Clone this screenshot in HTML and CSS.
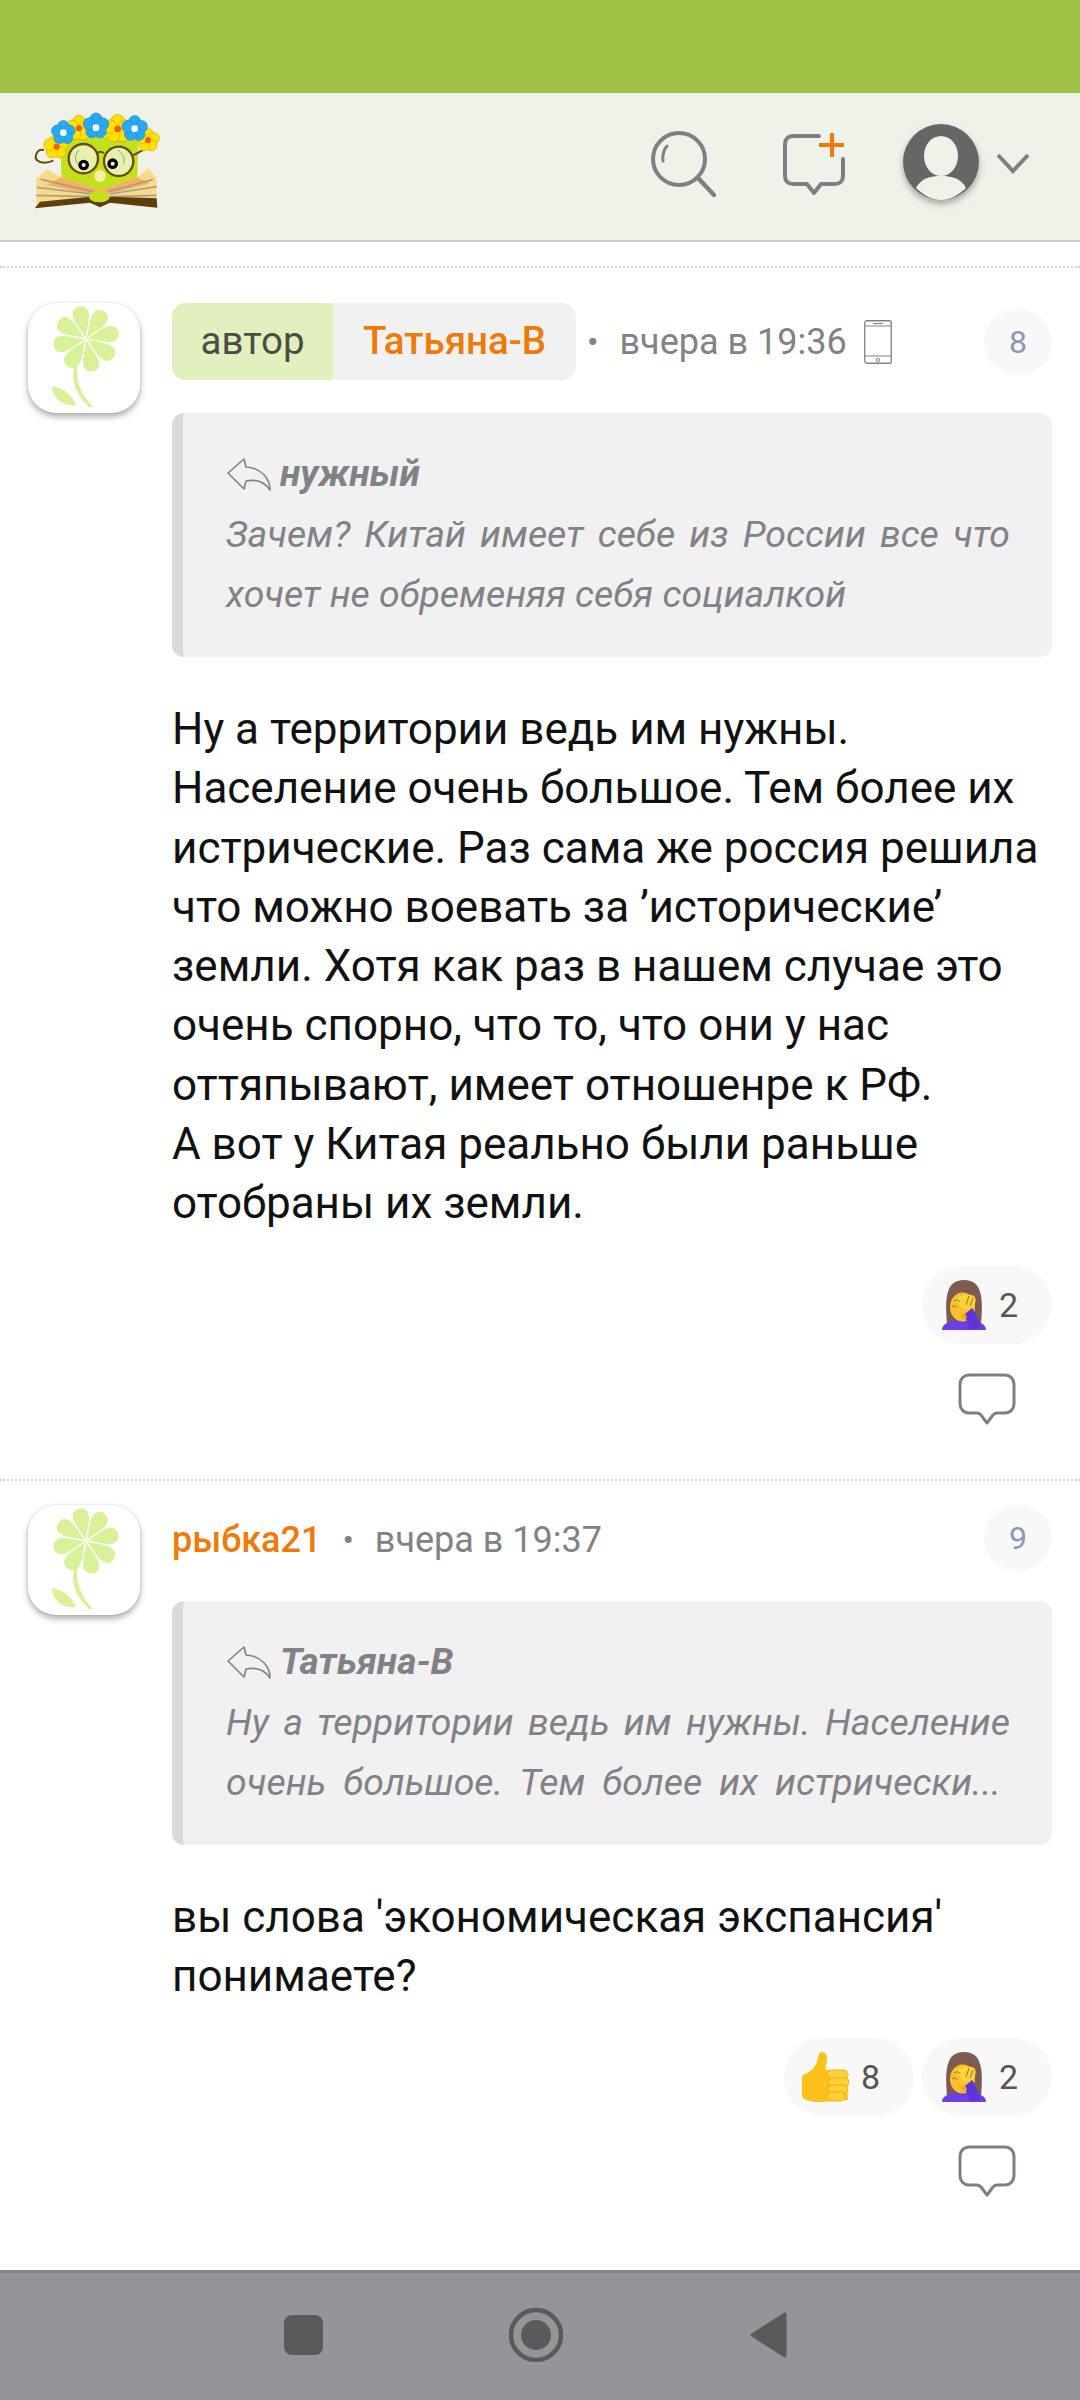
FILE: index.html
```html
<!DOCTYPE html>
<html lang="ru">
<head>
<meta charset="utf-8">
<title>Комментарии</title>
<link rel="stylesheet" href="styles.css">
</head>
<body>
<svg class="defs" width="0" height="0" aria-hidden="true">
  <defs>
    <path id="petal" d="M58 35C56 27 50 19 50 11C50 5 54 3 58 3C62 3 66 5 66 11C66 19 60 27 58 35Z"/>
    <symbol id="flower" viewBox="0 0 112 110">
      <g fill="#d9f199">
        <use href="#petal" transform="rotate(-12 58 36)"/>
        <use href="#petal" transform="rotate(33 58 36)"/>
        <use href="#petal" transform="rotate(78 58 36)"/>
        <use href="#petal" transform="rotate(123 58 36)"/>
        <use href="#petal" transform="rotate(168 58 36)"/>
        <use href="#petal" transform="rotate(213 58 36)"/>
        <use href="#petal" transform="rotate(258 58 36)"/>
        <use href="#petal" transform="rotate(303 58 36)"/>
        <path d="M46 64C43 80 48 92 61 104L65 104C54 92 48 80 49 64Z"/>
        <path d="M24 83C24 94 34 104 48 102C44 92 36 85 24 83Z"/>
      </g>
    </symbol>
    <symbol id="facepalm" viewBox="0 0 44 50">
      <path d="M5 44C3 20 3 0 22 0C41 0 41 20 39 44Z" fill="#7c5c50"/>
      <path d="M0 50C0 44 6 42 15 40L29 40C38 42 44 44 44 50Z" fill="#6a3fe6"/>
      <ellipse cx="20.500" cy="27" rx="12.500" ry="14.500" fill="#fbc02d"/>
      <path d="M13 19C19 14 30 13 33 17C35 22 32 28 28 30L21 29Z" fill="#fdd23c"/>
      <path d="M12 21C14 19 17 20 18 22M10 27C12 25 14 26 15 28M27 16L24 25M31 18L28 26" fill="none" stroke="#8a6a1a" stroke-width=".9"/>
      <path d="M21 35C24 33 27 31 30 28C34 33 37 41 38 48L28 50C27 45 25 40 21 35Z" fill="#6134d8"/>
      <path d="M19 36L23 33L25 38L21 40Z" fill="#f5a623"/>
    </symbol>
    <symbol id="thumb" viewBox="0 0 47 50">
      <path d="M20 0C23 0 26 3 25 9C24 13 23 16 24 18L44 18L46 48L20 50C8 50 1 48 0 44L0 26C0 23 2 22 5 21C11 18 15 13 16 5C16 2 18 0 20 0Z" fill="#fcc21b"/>
      <g fill="#fdd03a" stroke="#eda600" stroke-width=".8">
        <rect x="25" y="18" width="21" height="9" rx="4.5"/>
        <rect x="26" y="26" width="21" height="8" rx="4"/>
        <rect x="26" y="33" width="20" height="8" rx="4"/>
        <rect x="25" y="40" width="18" height="9" rx="4.5"/>
      </g>
    </symbol>
    <symbol id="bubble" viewBox="0 0 58 53">
      <path d="M11 2H47C52 2 56 6 56 11V31C56 36 52 40 47 40H39C37 40 36 41 35 42L29 50L23 42C22 41 21 40 19 40H11C6 40 2 36 2 31V11C2 6 6 2 11 2Z" fill="none" stroke="#7d8083" stroke-width="3" stroke-linejoin="round"/>
    </symbol>
    <symbol id="reply" viewBox="0 0 46 34">
      <path d="M18 2L2 16L18 32L20 24C30 22 38 24 44 33C44 22 36 11 20 10Z" fill="none" stroke="#808285" stroke-width="1.6" stroke-linejoin="round"/>
    </symbol>
    <g id="lf-petals">
      <circle cx="0" cy="-15" r="13"/>
      <circle cx="14.3" cy="-4.6" r="13"/>
      <circle cx="8.8" cy="12.1" r="13"/>
      <circle cx="-8.8" cy="12.1" r="13"/>
      <circle cx="-14.3" cy="-4.6" r="13"/>
    </g>
  </defs>
</svg>

<div class="statusbar"></div>

<header class="topbar">
  <svg class="logo" viewBox="0 60 480 300" aria-label="логотип">
    <path d="M100 212C70 225 42 215 48 195C52 182 62 178 72 180" fill="none" stroke="#6b4a10" stroke-width="6"/>
    <path d="M122 140L355 140L352 262L240 300L124 262Z" fill="#c2e01c"/>
    <path d="M82 238L48 268L50 342L235 325L410 335L410 265L385 234L352 262L240 300L124 262Z" fill="#fbd98a"/>
    <path d="M124 262L240 300L352 262L390 280L245 318L80 285Z" fill="#f4a04c" opacity=".75"/>
    <path d="M62 268L220 305M50 292L215 312M48 316L215 320M400 268L265 305M410 290L270 312M410 316L270 320" stroke="#a8a08a" stroke-width="5" fill="none"/>
    <path d="M44 355L60 335L210 320L270 320L410 325L412 353L270 338L240 352L210 338Z" fill="#5e3e0a"/>
    <ellipse cx="238" cy="320" rx="31" ry="17" fill="#c2e01c"/>
    <ellipse cx="240" cy="258" rx="17" ry="18" fill="#f8efa6"/>
    <g fill="#e8f0b0" stroke="#6b4a10" stroke-width="7">
      <circle cx="190" cy="206" r="44"/>
      <circle cx="296" cy="214" r="44"/>
    </g>
    <path d="M232 190Q240 180 252 190M340 196L372 178" fill="none" stroke="#6b4a10" stroke-width="6"/>
    <path d="M178 180C160 195 165 215 178 225M292 180C312 190 315 210 310 222" fill="none" stroke="#9aa47c" stroke-width="3"/>
    <circle cx="191" cy="225" r="16" fill="#000"/><circle cx="191" cy="225" r="6" fill="#fff"/>
    <circle cx="278" cy="221" r="16" fill="#000"/><circle cx="278" cy="221" r="6" fill="#fff"/>
    <g fill="#ffe100" stroke="#d9a800" stroke-width="1.5">
      <use href="#lf-petals" transform="translate(108 170) scale(1.35)"/>
      <use href="#lf-petals" transform="translate(177 115) scale(1.4)"/>
      <use href="#lf-petals" transform="translate(293 117) scale(1.55)"/>
      <use href="#lf-petals" transform="translate(384 151) scale(1.25)"/>
    </g>
    <g fill="#f25c0c">
      <circle cx="110" cy="170" r="9"/><circle cx="177" cy="115" r="9"/><circle cx="293" cy="117" r="10"/><circle cx="384" cy="151" r="9"/>
    </g>
    <g fill="#2ba8f2" stroke="#1a90d8" stroke-width="1.5">
      <use href="#lf-petals" transform="translate(130 128) scale(1.3)"/>
      <use href="#lf-petals" transform="translate(228 108) scale(1.4)"/>
      <use href="#lf-petals" transform="translate(344 116) scale(1.4)"/>
    </g>
    <g fill="#fff">
      <circle cx="130" cy="128" r="10"/><circle cx="228" cy="113" r="10"/><circle cx="344" cy="116" r="10"/>
    </g>
  </svg>
  <div class="actions">
    <svg class="ico-search" viewBox="0 0 66 66" aria-label="поиск">
      <circle cx="29" cy="28" r="26" fill="none" stroke="#7d8083" stroke-width="4"/>
      <path d="M48 47L64 64" stroke="#7d8083" stroke-width="4.5" stroke-linecap="round"/>
      <path d="M13 30C12 25 14 18 17 15" fill="none" stroke="#7d8083" stroke-width="3" stroke-linecap="round"/>
    </svg>
    <svg class="ico-compose" viewBox="0 0 62 62" aria-label="написать">
      <path d="M36 3H10C5 3 2 6 2 11V43C2 48 5 51 10 51H24L31 60L38 51H52C57 51 60 48 60 43V26" fill="none" stroke="#7d8083" stroke-width="4" stroke-linecap="round" stroke-linejoin="round"/>
      <path d="M49 0V24M36 12H61" stroke="#ee7a0a" stroke-width="4"/>
    </svg>
    <svg class="ico-user" viewBox="0 0 76 76" aria-label="профиль">
      <circle cx="38" cy="38" r="38" fill="#666"/>
      <ellipse cx="38" cy="32" rx="17" ry="20" fill="#f0f1e9"/>
      <path d="M13 64C18 54 28 52 38 52C48 52 58 54 63 64C56 71 47 76 38 76C29 76 20 71 13 64Z" fill="#f0f1e9"/>
    </svg>
    <svg class="ico-chev" viewBox="0 0 34 22" aria-hidden="true">
      <path d="M2 3L17 19L32 3" fill="none" stroke="#7d8083" stroke-width="4"/>
    </svg>
  </div>
</header>

<main class="feed">
  <article class="comment comment-first">
    <div class="avatar"><svg class="avatar-img"><use href="#flower"/></svg></div>
    <div class="content">
      <div class="head head-tag">
        <div class="usertag"><span class="usertag-role">автор</span><span class="usertag-name">Татьяна-В</span></div>
        <span class="sep">•</span>
        <span class="time">вчера в 19:36</span>
        <svg class="ico-phone" viewBox="0 0 28 44" aria-label="с телефона">
          <rect x=".75" y=".75" width="26.5" height="42.5" rx="2" fill="none" stroke="#808285" stroke-width="1.3"/>
          <path d="M1 6H27M1 36H27M9 3.5H19" stroke="#808285" stroke-width="1.2" fill="none"/>
          <circle cx="14" cy="40" r="1.6" fill="none" stroke="#808285" stroke-width="1"/>
        </svg>
        <span class="num">8</span>
      </div>
      <blockquote class="quote">
        <div class="quote-author"><svg class="ico-reply"><use href="#reply"/></svg>нужный</div>
        <p class="quote-text">Зачем? Китай имеет себе из России все что хочет не обременяя себя социалкой</p>
      </blockquote>
      <p class="text">Ну а территории ведь им нужны. Население очень большое. Тем более их истрические. Раз сама же россия решила что можно воевать за ’исторические’ земли. Хотя как раз в нашем случае это очень спорно, что то, что они у нас оттяпывают, имеет отношенре к РФ.<br>А вот у Китая реально были раньше отобраны их земли.</p>
      <div class="reactions">
        <span class="pill"><svg class="emoji"><use href="#facepalm"/></svg>2</span>
      </div>
      <div class="reply-row"><svg class="ico-bubble"><use href="#bubble"/></svg></div>
    </div>
  </article>

  <article class="comment">
    <div class="avatar"><svg class="avatar-img"><use href="#flower"/></svg></div>
    <div class="content">
      <div class="head head-plain">
        <span class="username">рыбка21</span>
        <span class="sep sep-wide">•</span>
        <span class="time">вчера в 19:37</span>
        <span class="num">9</span>
      </div>
      <blockquote class="quote">
        <div class="quote-author"><svg class="ico-reply"><use href="#reply"/></svg>Татьяна-В</div>
        <p class="quote-text quote-clamp">Ну а территории ведь им нужны. Население очень большое. Тем более их истрически...&nbsp;</p>
      </blockquote>
      <p class="text">вы слова 'экономическая экспансия' понимаете?</p>
      <div class="reactions">
        <span class="pill"><svg class="emoji emoji-thumb"><use href="#thumb"/></svg>8</span>
        <span class="pill"><svg class="emoji"><use href="#facepalm"/></svg>2</span>
      </div>
      <div class="reply-row"><svg class="ico-bubble"><use href="#bubble"/></svg></div>
    </div>
  </article>
</main>

<nav class="navbar">
  <svg class="nav-square" viewBox="0 0 40 40" aria-label="недавние"><rect width="39" height="40" rx="8" fill="#5a5a5a"/></svg>
  <svg class="nav-circle" viewBox="0 0 54 54" aria-label="домой"><circle cx="27" cy="27" r="25" fill="none" stroke="#5a5a5a" stroke-width="4.5"/><circle cx="27" cy="27" r="15" fill="#5a5a5a"/></svg>
  <svg class="nav-back" viewBox="0 0 38 46" aria-label="назад"><path d="M35 2L2 23L35 44Z" fill="#5a5a5a" stroke="#5a5a5a" stroke-width="3" stroke-linejoin="round"/></svg>
</nav>
</body>
</html>
```
FILE: styles.css
```css
* { box-sizing: border-box; }
html, body { margin: 0; padding: 0; }
body {
  width: 1080px;
  height: 2400px;
  display: flex;
  flex-direction: column;
  overflow: hidden;
  background: #fff;
  font-family: Roboto, "Liberation Sans", sans-serif;
  color: #111;
}
.defs { position: absolute; }

.statusbar { height: 93px; flex: none; background: #9ec045; }

.topbar {
  height: 149px;
  flex: none;
  display: flex;
  background: #f0f1e9;
  border-bottom: 2px solid #ccc;
  padding: 17px 0 0 20px;
}
.logo { width: 160px; height: 100px; }
.actions { position: relative; flex: 1; display: flex; align-items: flex-start; }
.ico-search { width: 66px; height: 66px; margin: 21px 0 0 470px; }
.ico-compose { width: 62px; height: 62px; margin: 23px 0 0 67px; }
.ico-user { width: 76px; height: 76px; margin: 14px 0 0 58px; filter: drop-shadow(0 4px 3px rgba(0,0,0,.3)); }
.ico-chev { width: 34px; height: 22px; margin: 42px 0 0 17px; }

.feed { flex: 1; padding-top: 24px; min-height: 0; }

.comment {
  display: flex;
  gap: 32px;
  padding: 24px 28px 53px;
  border-top: 2px dotted #d8d8d8;
}
.comment-first { padding-top: 35px; }
.avatar {
  width: 112px;
  height: 110px;
  flex: none;
  border-radius: 28px;
  background: #fff;
  box-shadow: 0 4px 6px rgba(0,0,0,.3), 0 0 3px rgba(0,0,0,.12);
}
.avatar-img { width: 112px; height: 110px; display: block; }
.content { flex: 1; min-width: 0; }

.head { display: flex; align-items: center; height: 66px; margin-bottom: 30px; }
.head-tag { height: 77px; margin-bottom: 33px; }
.usertag { display: flex; height: 77px; border-radius: 14px; overflow: hidden; background: #f1f1f1; font-size: 38.5px; }
.usertag-role { width: 161px; display: flex; align-items: center; justify-content: center; background: #e2f0bd; color: #4a4d47; padding-bottom: 2px; }
.usertag-name { width: 243px; display: flex; align-items: center; justify-content: center; color: #ee7a0a; font-weight: 500; padding-bottom: 2px; }
.username { color: #ee7a0a; font-weight: 500; font-size: 36px; }
.sep { font-size: 34px; color: #808285; margin: 0 21px 0 11px; }
.sep-wide { margin: 0 21px 0 21px; }
.time { font-size: 36px; color: #808285; }
.head-plain .username, .head-plain .sep, .head-plain .time { margin-top: 4px; }
.ico-phone { width: 28px; height: 44px; margin-left: 17px; }
.num {
  width: 68px;
  height: 66px;
  margin-left: auto;
  border-radius: 50%;
  background: #f8f8f8;
  display: flex;
  align-items: center;
  justify-content: center;
  font-size: 32px;
  color: #8c97b5;
}
.quote {
  margin: 0;
  height: 244px;
  padding: 31px 42px 0 43px;
  background: #f1f1f1;
  border-left: 11px solid #dadada;
  border-radius: 12px;
  color: #808285;
  font-style: italic;
  font-size: 37px;
  line-height: 60px;
}
.quote-author { font-weight: 700; display: flex; align-items: center; gap: 8px; }
.ico-reply { width: 46px; height: 34px; }
.quote-text { margin: 0; text-align: justify; font-size: 37.4px; }
.quote-clamp { text-align-last: justify; height: 120px; overflow: hidden; }

.text { margin: 43px 0 32px; font-size: 44px; line-height: 59.3px; color: #111; }

.reactions { display: flex; justify-content: flex-end; gap: 8px; }
.pill {
  width: 130px;
  height: 78px;
  border-radius: 39px;
  background: #f8f8f8;
  display: flex;
  align-items: center;
  padding-left: 20px;
  gap: 13px;
  font-size: 34px;
  color: #555;
}
.emoji { width: 44px; height: 50px; flex: none; }
.emoji-thumb { width: 47px; margin: 0 -1px 0 -2px; }
.reply-row { display: flex; justify-content: flex-end; padding: 29px 36px 0 0; }
.ico-bubble { width: 58px; height: 53px; display: block; }

.navbar {
  height: 130px;
  flex: none;
  position: relative;
  background: #959499;
  border-top: 3px solid #85848a;
  display: flex;
  align-items: center;
  padding: 0 0 3px 284px;
}
.nav-square { width: 40px; height: 40px; }
.nav-circle { width: 54px; height: 54px; margin-left: 185px; }
.nav-back { width: 38px; height: 46px; margin-left: 187px; }
```
